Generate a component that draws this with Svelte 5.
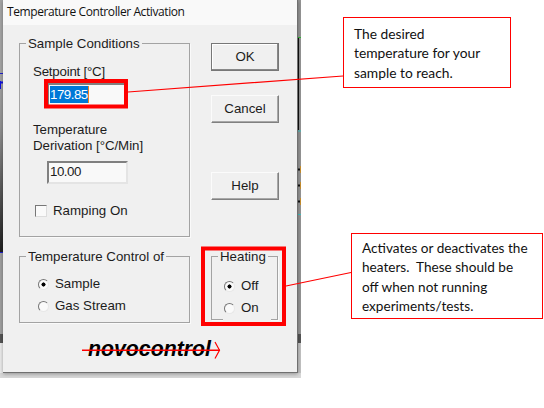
<script>
  let source = $state('Sample');
  let heating = $state('Off');
</script>

<main>
  <section class="capture">
    <svg class="backdrop" width="301" height="378" viewBox="0 0 301 378">
      <defs>
        <linearGradient id="left" x1="0" y1="0" x2="0" y2="1">
          <stop offset="0" stop-color="#a6a6a6" />
          <stop offset="0.3" stop-color="#929292" />
          <stop offset="1" stop-color="#202020" />
        </linearGradient>
      </defs>
      <rect width="301" height="378" fill="#d8d8d8" />
      <rect width="3" height="73" fill="#a5a5a5" />
      <rect y="73" width="3" height="179" fill="url(#left)" />
      <path d="M0 73.5H3M0 252.5H3" stroke="#2020d0" />
      <path d="M0 81V89M0 82.5H3" stroke="#1010e0" stroke-width="2" />
      <rect y="253" width="3" height="81" fill="#a0a0a0" />
      <rect y="334" width="3" height="9" fill="#555" />
      <rect y="343" width="3" height="30" fill="#ececec" />
      <rect x="297" width="4" height="334" fill="#969696" />
      <rect x="297.5" y="37" width="1.5" height="93" fill="#111" />
      <path d="M298 37.5H301" stroke="#30c030" />
      <path d="M298 131H301M298 214.5H301" stroke="#39c5c5" />
      <path d="M298 169.500H300M298 185.500H300M298 201.500H300" stroke="#111" stroke-width="2" />
      <path d="M300.500 166V173M300.500 182V189M300.500 198V205" stroke="#c89030" />
      <rect x="297" y="334" width="4" height="9" fill="#555" />
      <rect x="297" y="343" width="4" height="30" fill="#c4c4c4" />
    </svg>

    <div class="dialog">
      <header>Temperature Controller Activation</header>
      <div class="body">
        <div class="row">
          <div class="group conditions">
            <span class="legend">Sample Conditions</span>
            <span class="label">Setpoint [°C]</span>
            <div class="input first"><span class="selected">179.85</span></div>
            <span class="label two">Temperature<br />Derivation [°C/Min]</span>
            <div class="input">10.00</div>
            <div class="check"><i></i>Ramping On</div>
          </div>
          <div class="buttons">
            <button class="default">OK</button>
            <button>Cancel</button>
            <button class="help">Help</button>
          </div>
        </div>
        <div class="row lower">
          <div class="group source">
            <span class="legend">Temperature Control of</span>
            {#each ['Sample', 'Gas Stream'] as name}
              <div class="radio" onclick={() => (source = name)} role="presentation">
                <i class:on={source === name}></i>{name}
              </div>
            {/each}
          </div>
          <div class="group heating">
            <span class="legend">Heating</span>
            {#each ['Off', 'On'] as name}
              <div class="radio" onclick={() => (heating = name)} role="presentation">
                <i class:on={heating === name}></i>{name}
              </div>
            {/each}
            <b class="gap"></b>
          </div>
        </div>
        <div class="logo">
          <span>novocontrol</span>
          <svg width="140" height="20" viewBox="0 0 140 20">
            <path d="M0 10.300H138" stroke="#f00" stroke-width="1.500" fill="none" />
            <path d="M133 2L137.500 10.300L133 18.500" stroke="#f00" stroke-width="1.200" fill="none" />
          </svg>
        </div>
      </div>
    </div>
  </section>

  <aside>
    <div class="note one">The desired<br />temperature for your<br />sample to reach.</div>
    <div class="note second">Activates or deactivates the<br />heaters.&nbsp; These should be<br />off when not running<br />experiments/tests.</div>
  </aside>

  <svg class="marks" width="544" height="408" viewBox="0 0 544 408">
    <g fill="none" stroke="#f00">
      <rect x="46" y="81" width="80" height="25.500" stroke-width="4" />
      <rect x="203" y="248.500" width="81" height="75.500" stroke-width="4" />
      <path d="M128 92L343 76M286 286L351 272.500" stroke-width="1.200" />
    </g>
  </svg>
</main>

<style>
  :global(body) { margin: 0; background: #fff; }
  main { position: relative; display: flex; width: 544px; height: 408px; overflow: hidden; }
  .capture {
    position: relative; width: 301px; height: 378px; box-sizing: border-box;
    padding-left: 3px; flex: none; overflow: hidden;
  }
  .backdrop { position: absolute; left: 0; top: 0; }
  .dialog {
    position: relative; width: 295px; height: 373px; box-sizing: border-box;
    background: #f0f0f0; border-right: 1px solid #707070; border-bottom: 1px solid #707070;
    box-shadow: 0 1px 4px #0005;
    font: 13.3px/16px "Liberation Sans", Arial, sans-serif; color: #1c1c1c;
  }
  header {
    height: 25px; background: #f9f9f9; padding-left: 4px;
    font: 12px/24px "Open Sans", "Noto Sans", sans-serif; letter-spacing: -0.41px;
    color: #111; white-space: nowrap; box-sizing: border-box;
  }
  .body { padding: 18px 0 0 16px; }
  .row { display: flex; gap: 21px; }
  .group {
    border: 1px solid #a3a3a3; box-shadow: 1px 1px 0 #fafafa; box-sizing: border-box;
    display: flex; flex-direction: column; align-items: flex-start; white-space: nowrap;
  }
  .legend { background: #f0f0f0; padding: 0 2px; margin: -8px 0 0 6px; height: 16px; }
  .conditions { width: 171px; height: 194px; }
  .label { margin: 12px 0 0 13px; letter-spacing: -0.22px; }
  .label.two { margin-top: 14px; letter-spacing: -0.05px; }
  .input {
    width: 81px; height: 23px; box-sizing: border-box; margin: 7px 0 0 27px;
    border: 2px solid; border-color: #808080 #e4e4e4 #e4e4e4 #808080;
    background: #f9f9f9; padding: 0 0 0 1px; line-height: 17px; letter-spacing: -0.5px;
  }
  .input.first { margin-top: 3px; height: 25px; padding-top: 1px; }
  .selected { display: inline-block; background: #0078d7; color: #fff; border-right: 1px solid #f08020; }
  .check { display: flex; align-items: center; margin: 19px 0 0 15px; gap: 6px; }
  .check i {
    width: 12px; height: 12px; box-sizing: border-box; background: #fafafa;
    border: 1px solid; border-color: #777 #ddd #ddd #777;
  }
  .buttons { display: flex; flex-direction: column; }
  button {
    width: 68px; height: 28px; box-sizing: border-box; padding: 0 0 1px; margin: 0 0 24px;
    border: 1px solid; border-color: #fbfbfb #808080 #808080 #fbfbfb;
    box-shadow: inset -1px -1px 0 #a8a8a8; background: #f0f0f0; font: inherit; color: #1c1c1c;
  }
  .default { border-color: #777; box-shadow: inset -1px -1px 0 #888, inset 1px 1px 0 #fff; }
  .help { margin-top: 25px; }
  .lower { margin-top: 19px; align-items: flex-start; }
  .source { width: 171px; height: 67px; }
  .heating { position: relative; width: 67px; height: 64px; }
  .gap { position: absolute; left: 11px; right: 6px; bottom: -2px; height: 3px; background: #f0f0f0; }
  .radio { display: flex; align-items: center; gap: 6px; margin: 11px 0 0 18px; height: 16px; }
  .radio + .radio { margin-top: 6px; }
  .heating .radio { margin-left: 12px; }
  .heating .legend + .radio { margin-top: 13px; }
  .radio i {
    width: 11px; height: 11px; box-sizing: border-box; border-radius: 50%;
    border: 1px solid; border-color: #777 #e8e8e8 #e8e8e8 #777; background: #fafafa;
  }
  .radio i.on { background: radial-gradient(circle, #000 0 1.8px, #fafafa 2.3px); }
  .logo { position: relative; margin: 14px 0 0 63px; width: 140px; height: 26px; }
  .logo span { display: block; padding-left: 6px; font: italic bold 21.3px/24px "Liberation Sans", Arial, sans-serif; color: #000; }
  .logo svg { position: absolute; left: 0; top: 3px; }
  aside { display: flex; flex-direction: column; padding: 17px 0 0 42px; align-items: flex-start; }
  .note {
    box-sizing: border-box; border: 1px solid #f00; background: #fff; white-space: nowrap;
    font: 13.8px/19.400px Lato, "Open Sans", sans-serif; color: #111; padding: 6px 0 0 10px;
  }
  .one { width: 168px; height: 71px; }
  .second { width: 192px; height: 86px; margin: 145px 0 0 8px; font-size: 13.6px; padding-top: 5px; }
  .marks { position: absolute; left: 0; top: 0; pointer-events: none; }
</style>
